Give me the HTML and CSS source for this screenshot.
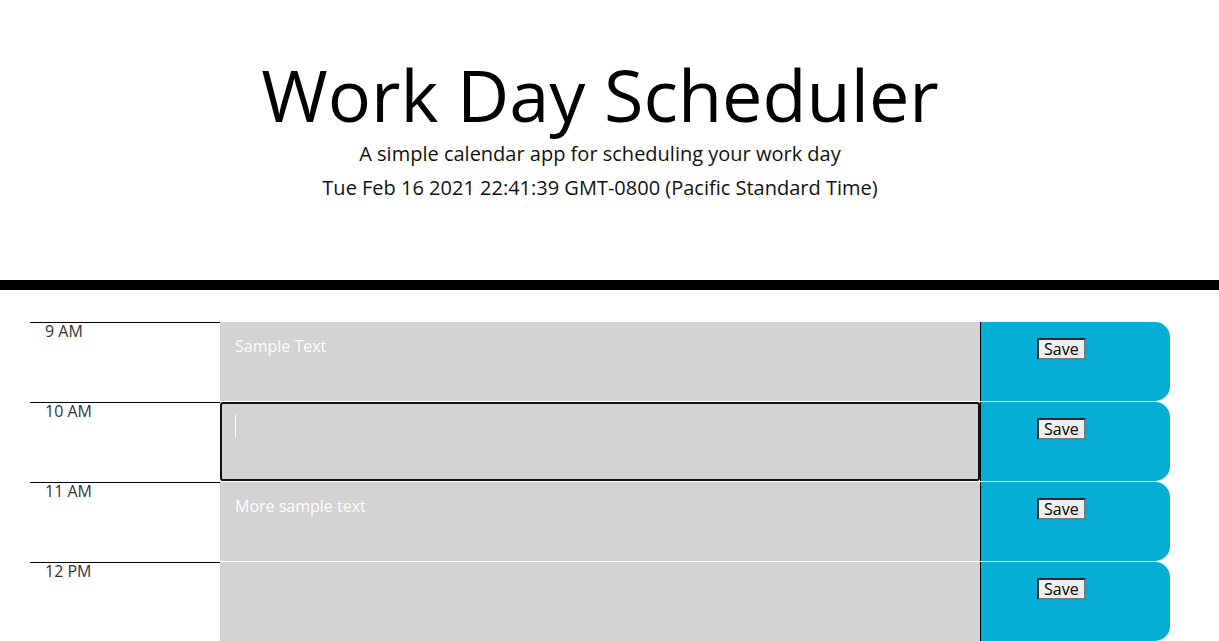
FILE: index.html
```html
<!DOCTYPE html>
<html lang="en">
<head>
<meta charset="utf-8">
<title>Work Day Scheduler</title>
<link rel="stylesheet" href="styles.css">
</head>
<body>
<header class="jumbotron">
  <div class="page">
    <h1 class="title">Work Day Scheduler</h1>
    <p class="lead">A simple calendar app for scheduling your work day</p>
    <p class="current-day">Tue Feb 16 2021 22:41:39 GMT-0800 (Pacific Standard Time)</p>
  </div>
</header>
<main class="page">
  <div class="schedule">
    <div class="row">
      <div class="hour">9 AM</div>
      <div class="slot"><textarea class="description">Sample Text</textarea></div>
      <div class="save-col"><button class="save-btn">Save</button></div>
    </div>
    <div class="row">
      <div class="hour">10 AM</div>
      <div class="slot"><textarea class="description focused"></textarea><span class="caret"></span></div>
      <div class="save-col"><button class="save-btn">Save</button></div>
    </div>
    <div class="row">
      <div class="hour">11 AM</div>
      <div class="slot"><textarea class="description">More sample text</textarea></div>
      <div class="save-col"><button class="save-btn">Save</button></div>
    </div>
    <div class="row">
      <div class="hour">12 PM</div>
      <div class="slot"><textarea class="description"></textarea></div>
      <div class="save-col"><button class="save-btn">Save</button></div>
    </div>
  </div>
</main>
</body>
</html>
```
FILE: styles.css
```css
html, body {
  margin: 0;
  padding: 0;
  background: #ffffff;
}

body {
  font-family: "Open Sans", "Liberation Sans", Arial, sans-serif;
  color: #000;
  overflow: hidden;
}

.page {
  width: 1200px;
}

.jumbotron {
  border-bottom: 10px solid #000;
  padding: 54px 0 77px;
  text-align: center;
}

.title {
  margin: 0;
  font-size: 72px;
  line-height: 80px;
  font-weight: 400;
}

.lead {
  margin: 5px 0 0;
  font-size: 20px;
  line-height: 30px;
  font-weight: 400;
  color: #111;
}

.current-day {
  margin: 4px 0 0;
  font-size: 20px;
  line-height: 30px;
  font-weight: 400;
  color: #111;
}

.schedule {
  margin: 31px 0 0 30px;
  width: 1140px;
  display: flex;
  flex-direction: column;
}

.row {
  display: flex;
  height: 80px;
  border-top: 1px solid #fff;
  box-sizing: border-box;
}

.hour {
  width: 190px;
  flex: none;
  box-sizing: border-box;
  border-top: 1px solid #000;
  padding-left: 15px;
  font-family: "Open Sans", sans-serif;
  font-size: 16px;
  line-height: 16px;
  color: #333;
}

.slot {
  position: relative;
  width: 760px;
  flex: none;
  display: flex;
}

.description {
  flex: 1;
  margin: 0;
  border: none;
  resize: none;
  background: #d3d3d3;
  color: #fff;
  font-family: "Open Sans", sans-serif;
  font-size: 16px;
  line-height: 24px;
  padding: 12px 15px;
  box-sizing: border-box;
  outline: none;
}

.description.focused {
  outline: 2px solid #111;
  outline-offset: -2px;
  border-radius: 3px;
}

.caret {
  position: absolute;
  left: 15px;
  top: 13px;
  width: 1px;
  height: 22px;
  background: #fff;
}

.save-col {
  width: 190px;
  flex: none;
  box-sizing: border-box;
  background: #06aed5;
  border-left: 1px solid #000;
  border-radius: 0 15px 15px 0;
  padding: 16px 0 0 56px;
}

.save-btn {
  display: block;
  height: 22px;
  margin: 0;
  padding: 0 5px;
  box-sizing: border-box;
  background: #efefef;
  border: 2px solid;
  border-color: #2a2a2a #777 #777 #2a2a2a;
  font-family: "Open Sans", sans-serif;
  font-size: 16px;
  line-height: 18px;
  color: #000;
}
```
